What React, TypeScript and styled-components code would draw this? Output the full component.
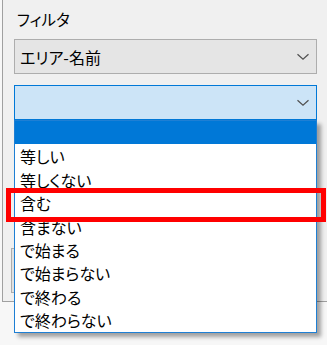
import React from "react";
import styled, { createGlobalStyle } from "styled-components";

const Global = createGlobalStyle`
  html, body { margin: 0; padding: 0; background: #f7f7f7; }
  body {
    font-family: "Noto Sans CJK JP", "Noto Sans", sans-serif;
    font-feature-settings: "palt";
    color: #000;
    overflow: hidden;
  }
`;

const Stage = styled.div`
  position: relative;
  width: 327px;
  height: 345px;
  overflow: hidden;
`;

const Panel = styled.div`
  margin-left: 2px;
  width: 340px;
  height: 302px;
  box-sizing: border-box;
  background: #f0f0f0;
  border-left: 1px solid #a0a0a0;
  border-bottom: 1px solid #a0a0a0;
  padding: 8px 0 0 8px;
  display: flex;
  flex-direction: column;
`;

const Label = styled.div`
  font-size: 15.5px;
  line-height: 22px;
  height: 22px;
  margin-left: 6px;
`;

const Combo = styled.div<{ $active?: boolean }>`
  margin-left: 3px;
  width: 303px;
  height: 35px;
  box-sizing: border-box;
  border: 1px solid ${(p) => (p.$active ? "#0078d7" : "#adadad")};
  background: ${(p) => (p.$active ? "#cce4f7" : "#e5e5e5")};
  display: flex;
  align-items: center;
  justify-content: space-between;
  padding: 0 6px 0 5px;
  font-size: 16px;
`;

const ComboText = styled.span`
  line-height: 20px;
  padding-top: 1px;
`;

const Chevron = () => (
  <svg width="14" height="8" viewBox="0 0 14 8">
    <path d="M1.5 1.2 L7 6.3 L12.5 1.2" fill="none" stroke="#505050" strokeWidth="1.2" />
  </svg>
);

const Gap = styled.div<{ $h: number }>`
  height: ${(p) => p.$h}px;
  flex: none;
`;

const HiddenButton = styled.div`
  width: 120px;
  height: 45px;
  box-sizing: border-box;
  border: 1px solid #adadad;
  background: #e1e1e1;
`;

const List = styled.ul`
  position: absolute;
  left: 14px;
  top: 120px;
  width: 303px;
  height: 213px;
  box-sizing: border-box;
  margin: 0;
  padding: 0;
  list-style: none;
  background: #fff;
  border: 1px solid #1e7fd4;
  box-shadow: 4px 4px 4px rgba(0, 0, 0, 0.35);
`;

const Item = styled.li<{ $selected?: boolean }>`
  height: 23.4px;
  box-sizing: border-box;
  padding: 1px 0 0 5px;
  font-size: 16px;
  line-height: 22px;
  white-space: nowrap;
  background: ${(p) => (p.$selected ? "#0078d7" : "transparent")};
  color: ${(p) => (p.$selected ? "#fff" : "#000")};
`;

const Highlight = styled.div`
  position: absolute;
  left: 6px;
  top: 188px;
  width: 320px;
  height: 34px;
  box-sizing: border-box;
  border: 5px solid #ff0000;
`;

const items = ["", "等しい", "等しくない", "含む", "含まない", "で始まる", "で始まらない", "で終わる", "で終わらない"];

export default function App() {
  return (
    <Stage>
      <Global />
      <Panel>
        <Label>フィルタ</Label>
        <Gap $h={9} />
        <Combo>
          <ComboText>エリア-名前</ComboText>
          <Chevron />
        </Combo>
        <Gap $h={11} />
        <Combo $active>
          <ComboText />
          <Chevron />
        </Combo>
        <Gap $h={128} />
        <HiddenButton />
      </Panel>
      <List>
        {items.map((t, i) => (
          <Item key={i} $selected={i === 0}>
            {t}
          </Item>
        ))}
      </List>
      <Highlight />
    </Stage>
  );
}
